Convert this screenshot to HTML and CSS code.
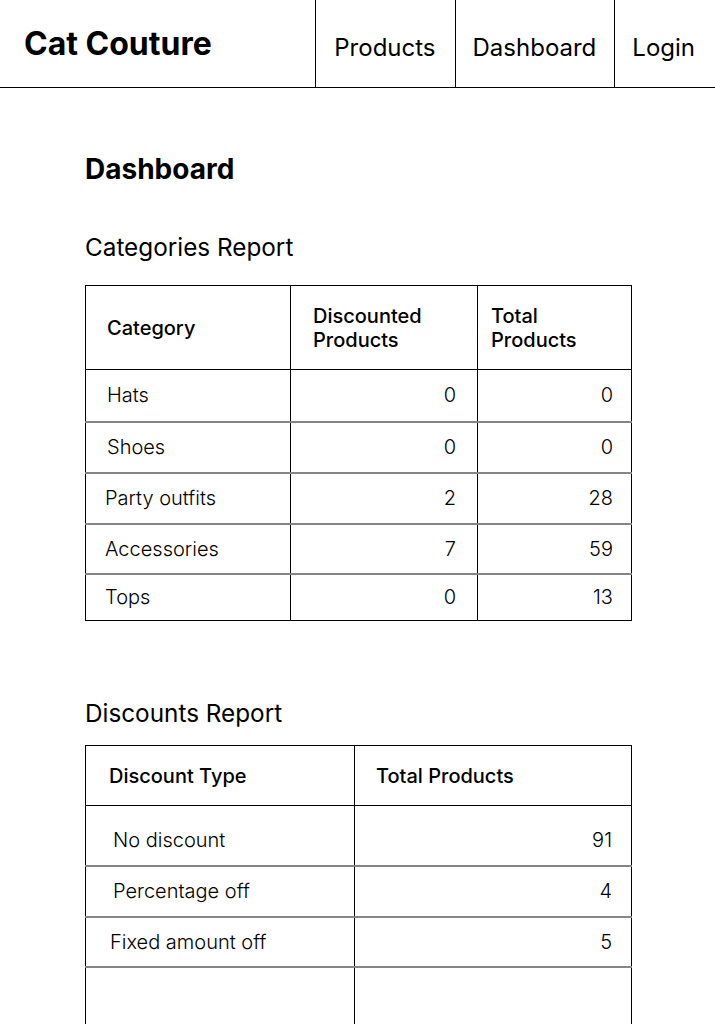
FILE: index.html
```html
<!DOCTYPE html>
<html lang="en">
<head>
<meta charset="utf-8">
<title>Cat Couture</title>
<link rel="stylesheet" href="styles.css">
</head>
<body>
<header class="topbar">
  <div class="logo">Cat Couture</div>
  <nav class="nav">
    <a class="nav-item" href="#">Products</a>
    <a class="nav-item" href="#">Dashboard</a>
    <a class="nav-item nav-last" href="#">Login</a>
  </nav>
</header>
<main class="content">
  <h1 class="page-title">Dashboard</h1>

  <h2 class="report-title">Categories Report</h2>
  <table class="report cat-report">
    <thead>
      <tr>
        <th class="c1">Category</th>
        <th class="c2">Discounted<br>Products</th>
        <th class="c3">Total<br>Products</th>
      </tr>
    </thead>
    <tbody>
      <tr class="first"><td class="c1">Hats</td><td class="num c2">0</td><td class="num c3">0</td></tr>
      <tr><td class="c1">Shoes</td><td class="num c2">0</td><td class="num c3">0</td></tr>
      <tr><td class="c1 tight">Party outfits</td><td class="num c2">2</td><td class="num c3">28</td></tr>
      <tr class="mid"><td class="c1 tight">Accessories</td><td class="num c2">7</td><td class="num c3">59</td></tr>
      <tr class="last"><td class="c1 tight">Tops</td><td class="num c2">0</td><td class="num c3">13</td></tr>
    </tbody>
  </table>

  <h2 class="report-title second">Discounts Report</h2>
  <table class="report disc-report">
    <thead>
      <tr>
        <th class="d1">Discount Type</th>
        <th class="d2">Total Products</th>
      </tr>
    </thead>
    <tbody>
      <tr class="tall"><td class="d1">No discount</td><td class="num d2">91</td></tr>
      <tr><td class="d1">Percentage off</td><td class="num d2">4</td></tr>
      <tr class="short"><td class="d1 tight">Fixed amount off</td><td class="num d2">5</td></tr>
      <tr class="empty"><td class="d1"></td><td class="d2"></td></tr>
    </tbody>
  </table>
</main>
</body>
</html>
```

FILE: styles.css
```css
* { box-sizing: border-box; }

body {
  margin: 0;
  font-family: Inter, "Noto Sans", "Liberation Sans", sans-serif;
  color: #000;
  background: #fff;
}

.topbar {
  display: flex;
  justify-content: space-between;
  align-items: stretch;
  height: 88px;
  border-bottom: 1px solid #000;
}

.logo {
  display: flex;
  align-items: center;
  padding-left: 24px;
  font-size: 32px;
  font-weight: 700;
}

.nav {
  display: flex;
  height: 87px;
}

.nav-item {
  display: flex;
  align-items: center;
  padding: 8px 18px 0 17px;
  border-left: 1px solid #000;
  font-size: 24px;
  color: #000;
  text-decoration: none;
}

.nav-item:first-child {
  padding-left: 18px;
  padding-right: 19px;
}

.nav-last {
  padding-right: 20px;
}

.content {
  padding: 0 84px 0 85px;
}

.page-title {
  margin: 64px 0 0;
  font-size: 28px;
  line-height: 34px;
  font-weight: 700;
}

.report-title {
  margin: 47px 0 0;
  font-size: 24.3px;
  line-height: 29px;
  font-weight: 400;
}

.report-title.second {
  margin-top: 78px;
}

.report {
  margin-top: 23px;
  width: 547px;
  border-collapse: collapse;
  border: 1px solid #000;
}

.disc-report {
  margin-top: 17px;
}

.report th {
  text-align: left;
  font-size: 20px;
  line-height: 24px;
  font-weight: 500;
  border-left: 1px solid #000;
  border-bottom: 1px solid #000;
  vertical-align: middle;
  padding-top: 0;
  padding-bottom: 0;
}

.report td {
  font-size: 20px;
  font-weight: 300;
  border-left: 1px solid #000;
  border-top: 2px solid #858585;
  vertical-align: middle;
  padding-top: 0;
  padding-bottom: 0;
}

.report tbody tr:first-child td {
  border-top: none;
}

.num { text-align: right; }

/* Categories table */
.cat-report th { height: 84px; padding-top: 1px; }
.cat-report td { height: 51px; }
.cat-report tr.first td { height: 52px; }
.cat-report tr.mid td { height: 50px; }
.cat-report tr.last td { height: 47px; }
.cat-report .c1 { width: 205px; padding-left: 21px; }
.cat-report td.c1.tight { padding-left: 19px; }
.cat-report .c2 { width: 187px; padding-left: 22px; padding-right: 21px; }
.cat-report .c3 { padding-left: 13px; padding-right: 18px; }

/* Discounts table */
.disc-report th { height: 60px; }
.disc-report td { height: 51px; }
.disc-report tr.tall td { height: 60px; padding-top: 9px; }
.disc-report tr.short td { height: 50px; }
.disc-report tr.empty td { height: 60px; }
.disc-report .d1 { width: 269px; padding-left: 23px; }
.disc-report th.d1 { padding-left: 23px; }
.disc-report td.d1 { padding-left: 27px; }
.disc-report td.d1.tight { padding-left: 24px; }
.disc-report .d2 { padding-left: 21px; padding-right: 19px; }
```
